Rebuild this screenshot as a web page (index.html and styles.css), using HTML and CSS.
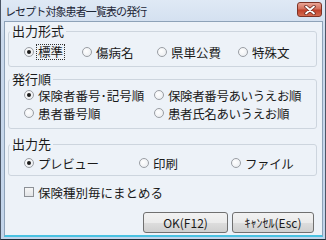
FILE: index.html
```html
<!DOCTYPE html>
<html lang="ja">
<head>
    <meta charset="UTF-8">
    <title>レセプト対象患者一覧表の発行</title>
    <link rel="stylesheet" href="styles.css">
</head>
<body>
    <div class="window">
        <div class="titlebar">
            <span class="title">レセプト対象患者一覧表の発行</span>
            <span class="close-btn">
                <svg width="14" height="10" viewBox="0 0 14 10">
                    <path d="M3 1.5 L11 8.5 M11 1.5 L3 8.5" stroke="#6b2b22" stroke-width="3.4" stroke-linecap="round"/>
                    <path d="M3 1.5 L11 8.5 M11 1.5 L3 8.5" stroke="#ffffff" stroke-width="1.8" stroke-linecap="round"/>
                </svg>
            </span>
        </div>

        <div class="client">
            <fieldset class="group group-type">
                <legend>出力形式</legend>
                <div class="opts opts-type">
                    <label class="opt"><span class="radio on"></span><span class="focus">標準</span></label>
                    <label class="opt"><span class="radio"></span>傷病名</label>
                    <label class="opt"><span class="radio"></span>県単公費</label>
                    <label class="opt"><span class="radio"></span>特殊文</label>
                </div>
            </fieldset>

            <fieldset class="group group-order">
                <legend>発行順</legend>
                <div class="opts opts-order">
                    <label class="opt"><span class="radio on"></span>保険者番号･記号順</label>
                    <label class="opt tight"><span class="radio"></span>保険者番号あいうえお順</label>
                    <label class="opt"><span class="radio"></span>患者番号順</label>
                    <label class="opt tight"><span class="radio"></span>患者氏名あいうえお順</label>
                </div>
            </fieldset>

            <fieldset class="group group-dest">
                <legend>出力先</legend>
                <div class="opts opts-dest">
                    <label class="opt tight"><span class="radio on"></span>プレビュー</label>
                    <label class="opt"><span class="radio"></span>印刷</label>
                    <label class="opt tight"><span class="radio"></span>ファイル</label>
                </div>
            </fieldset>

            <label class="check-row"><span class="checkbox"></span>保険種別毎にまとめる</label>

            <div class="buttons">
                <button class="btn btn-ok">OK(F12)</button>
                <button class="btn btn-cancel">ｷｬﾝｾﾙ(Esc)</button>
            </div>
        </div>
    </div>
</body>
</html>
```

FILE: styles.css
```css
body {
    margin: 0;
    font-family: "Noto Sans CJK JP", "Noto Sans", sans-serif;
    color: #1a1a1a;
}

.window {
    width: 326px;
    height: 240px;
    box-sizing: border-box;
    display: flex;
    flex-direction: column;
    background: linear-gradient(#dfe9f5, #cad9ec 40px, #c2d4ea);
    border-left: 1px solid #4b5666;
    border-right: 1px solid #4b5666;
    border-bottom: 1px solid #1f2a36;
}

.titlebar {
    height: 21px;
    display: flex;
    align-items: center;
    justify-content: space-between;
    padding: 0 3px 0 4px;
}

.title {
    font-size: 11px;
    letter-spacing: -0.9px;
    color: #1c2636;
    margin-top: 1px;
}

.close-btn {
    width: 23px;
    height: 13px;
    margin-top: -2px;
    border: 1px solid #7d3326;
    border-radius: 3px;
    background: linear-gradient(#e9a596, #d3705c 45%, #c0412b 55%, #d46a4f);
    display: flex;
    align-items: center;
    justify-content: center;
}

.client {
    flex: 1;
    margin: 0 2px 2px 3px;
    border: 1px solid #8ea2b8;
    border-bottom: 2px solid #49c2e2;
    background: #edf2f8;
    display: flex;
    flex-direction: column;
}

.group {
    margin: 0 5px 0 3px;
    padding: 0;
    border: 1px solid #cdd5de;
    border-radius: 3px;
}

.group legend {
    font-size: 13px;
    line-height: 14px;
    margin-left: 1px;
    padding: 0 2px;
}

.group-type {
    margin-top: 2px;
    padding-bottom: 5px;
}

.group-type .opts {
    padding-top: 5px;
}

.group-order {
    margin-top: 5px;
    padding-bottom: 6px;
}

.group-order .opts {
    padding-top: 0;
}

.group-dest {
    margin-top: 8px;
    padding-bottom: 3px;
}

.group-dest .opts {
    padding-top: 3px;
}

.opts {
    display: grid;
    padding-left: 15px;
    padding-top: 1px;
}

.opts-type {
    grid-template-columns: 58px 75px 81px auto;
}

.opts-order {
    grid-template-columns: 130px auto;
}

.opts-dest {
    grid-template-columns: 115px 92px auto;
}

.opt {
    height: 18px;
    display: flex;
    align-items: center;
    font-size: 12.5px;
    white-space: nowrap;
}

.opt.tight {
    letter-spacing: -0.4px;
}

.radio {
    width: 8px;
    height: 8px;
    border: 1px solid #9a9ea4;
    border-radius: 50%;
    background: radial-gradient(circle at 40% 40%, #ffffff, #e6e9ed);
    margin-right: 4px;
    display: flex;
    align-items: center;
    justify-content: center;
    flex-shrink: 0;
}

.radio.on::after {
    content: "";
    width: 4px;
    height: 4px;
    border-radius: 50%;
    background: #1b1b1b;
}

.focus {
    outline: 1px dotted #333;
    outline-offset: 0;
    padding: 0 1px;
    margin-left: -1px;
    line-height: 14px;
}

.check-row {
    margin: 7px 0 0 19px;
    height: 18px;
    display: flex;
    align-items: center;
    font-size: 12.5px;
}

.checkbox {
    width: 8px;
    height: 8px;
    border: 1px solid #8c9096;
    background: linear-gradient(#f6f6f6, #e2e4e7);
    margin-right: 4px;
}

.buttons {
    display: flex;
    justify-content: flex-end;
    gap: 4px;
    margin: 11px 8px 0 0;
}

.btn {
    height: 21px;
    padding: 0;
    white-space: nowrap;
    font-family: "Noto Sans CJK JP", "Noto Sans", sans-serif;
    font-size: 12px;
    color: #1a1a1a;
    border: 1px solid #707070;
    border-radius: 3px;
    background: linear-gradient(#f2f2f2, #ebebeb 50%, #dddddd 51%, #cfcfcf);
}

.btn-ok {
    width: 85px;
}

.btn-cancel {
    width: 82px;
}
```
